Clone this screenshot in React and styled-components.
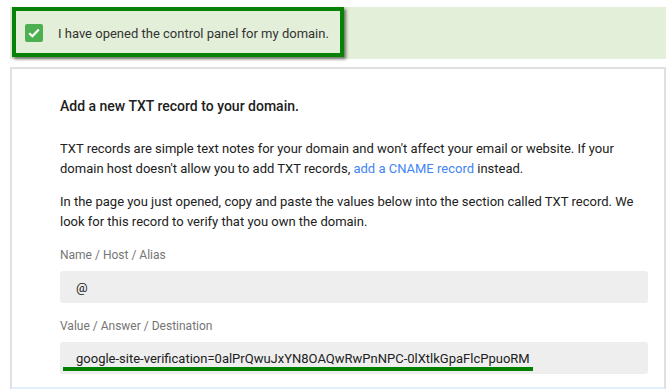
import styled, { createGlobalStyle } from "styled-components";

const GlobalStyle = createGlobalStyle`
  body {
    margin: 0;
    background: #fff;
    font-family: Roboto, "Liberation Sans", sans-serif;
    color: #212121;
  }
`;

const App = () => {
  return (
    <>
      <GlobalStyle />
      <Page>
        <Banner>
          <Highlight>
            <Check>
              <svg width="12" height="10" viewBox="0 0 12 10">
                <path
                  d="M1.2 5.2 L4.4 8.2 L10.8 1.6"
                  fill="none"
                  stroke="#fff"
                  strokeWidth="2.2"
                />
              </svg>
            </Check>
            <span>I have opened the control panel for my domain.</span>
          </Highlight>
        </Banner>

        <Card>
          <Heading>Add a new TXT record to your domain.</Heading>
          <Para>
            TXT records are simple text notes for your domain and won't affect
            your email or website. If your domain host doesn't allow you to add
            TXT records, <Link href="#">add a CNAME record</Link> instead.
          </Para>
          <Para>
            In the page you just opened, copy and paste the values below into
            the section called TXT record. We look for this record to verify
            that you own the domain.
          </Para>

          <Label>Name / Host / Alias</Label>
          <Field>@</Field>

          <Label>Value / Answer / Destination</Label>
          <Field>
            google-site-verification=0alPrQwuJxYN8OAQwRwPnNPC-0lXtlkGpaFlcPpuoRM
            <Underline />
          </Field>
          <BottomStrip />
        </Card>
      </Page>
    </>
  );
};

export default App;

const Page = styled.div`
  padding: 7px 6px 0 10px;
`;

const Banner = styled.div`
  background: #e3efd8;
  height: 52px;
  display: flex;
  align-items: flex-start;
  padding-left: 2px;
`;

const Highlight = styled.div`
  display: inline-flex;
  align-items: center;
  box-sizing: border-box;
  height: 50px;
  padding: 2px 11px 0 9px;
  border: 4px solid #078207;
  box-shadow: 2px 2px 3px rgba(0, 0, 0, 0.55);
  font-size: 13px;
  color: #333;

  > span {
    margin-left: 15px;
  }
`;

const Check = styled.div`
  width: 18px;
  height: 18px;
  border-radius: 2px;
  background: #4caf50;
  display: flex;
  align-items: center;
  justify-content: center;
`;

const Card = styled.div`
  margin-top: 8px;
  border: 2px solid #e0e0e0;
  border-bottom: none;
  padding: 27px 16px 0 48px;
  height: 322px;
  box-sizing: border-box;
  position: relative;
`;

const Heading = styled.h2`
  margin: 0 0 23px;
  font-size: 14px;
  font-weight: 500;
  line-height: 20px;
  color: #212121;
`;

const Para = styled.p`
  margin: 0 0 13px;
  font-size: 13px;
  line-height: 20px;
  color: #212121;
`;

const Link = styled.a`
  color: #4285f4;
  text-decoration: none;
`;

const Label = styled.div`
  margin-top: 15px;
  font-size: 12px;
  line-height: 16px;
  color: #757575;
`;

const Field = styled.div`
  position: relative;
  margin-top: 8px;
  height: 32px;
  background: #eeeeee;
  border-radius: 3px;
  padding-left: 16px;
  display: flex;
  align-items: center;
  font-size: 13px;
  color: #212121;
`;

const Underline = styled.div`
  position: absolute;
  left: 3px;
  top: 25px;
  width: 470px;
  height: 4px;
  background: #008000;
`;

const BottomStrip = styled.div`
  position: absolute;
  left: 0;
  right: 0;
  bottom: 0;
  height: 2px;
  background: #e3f0fb;
`;
